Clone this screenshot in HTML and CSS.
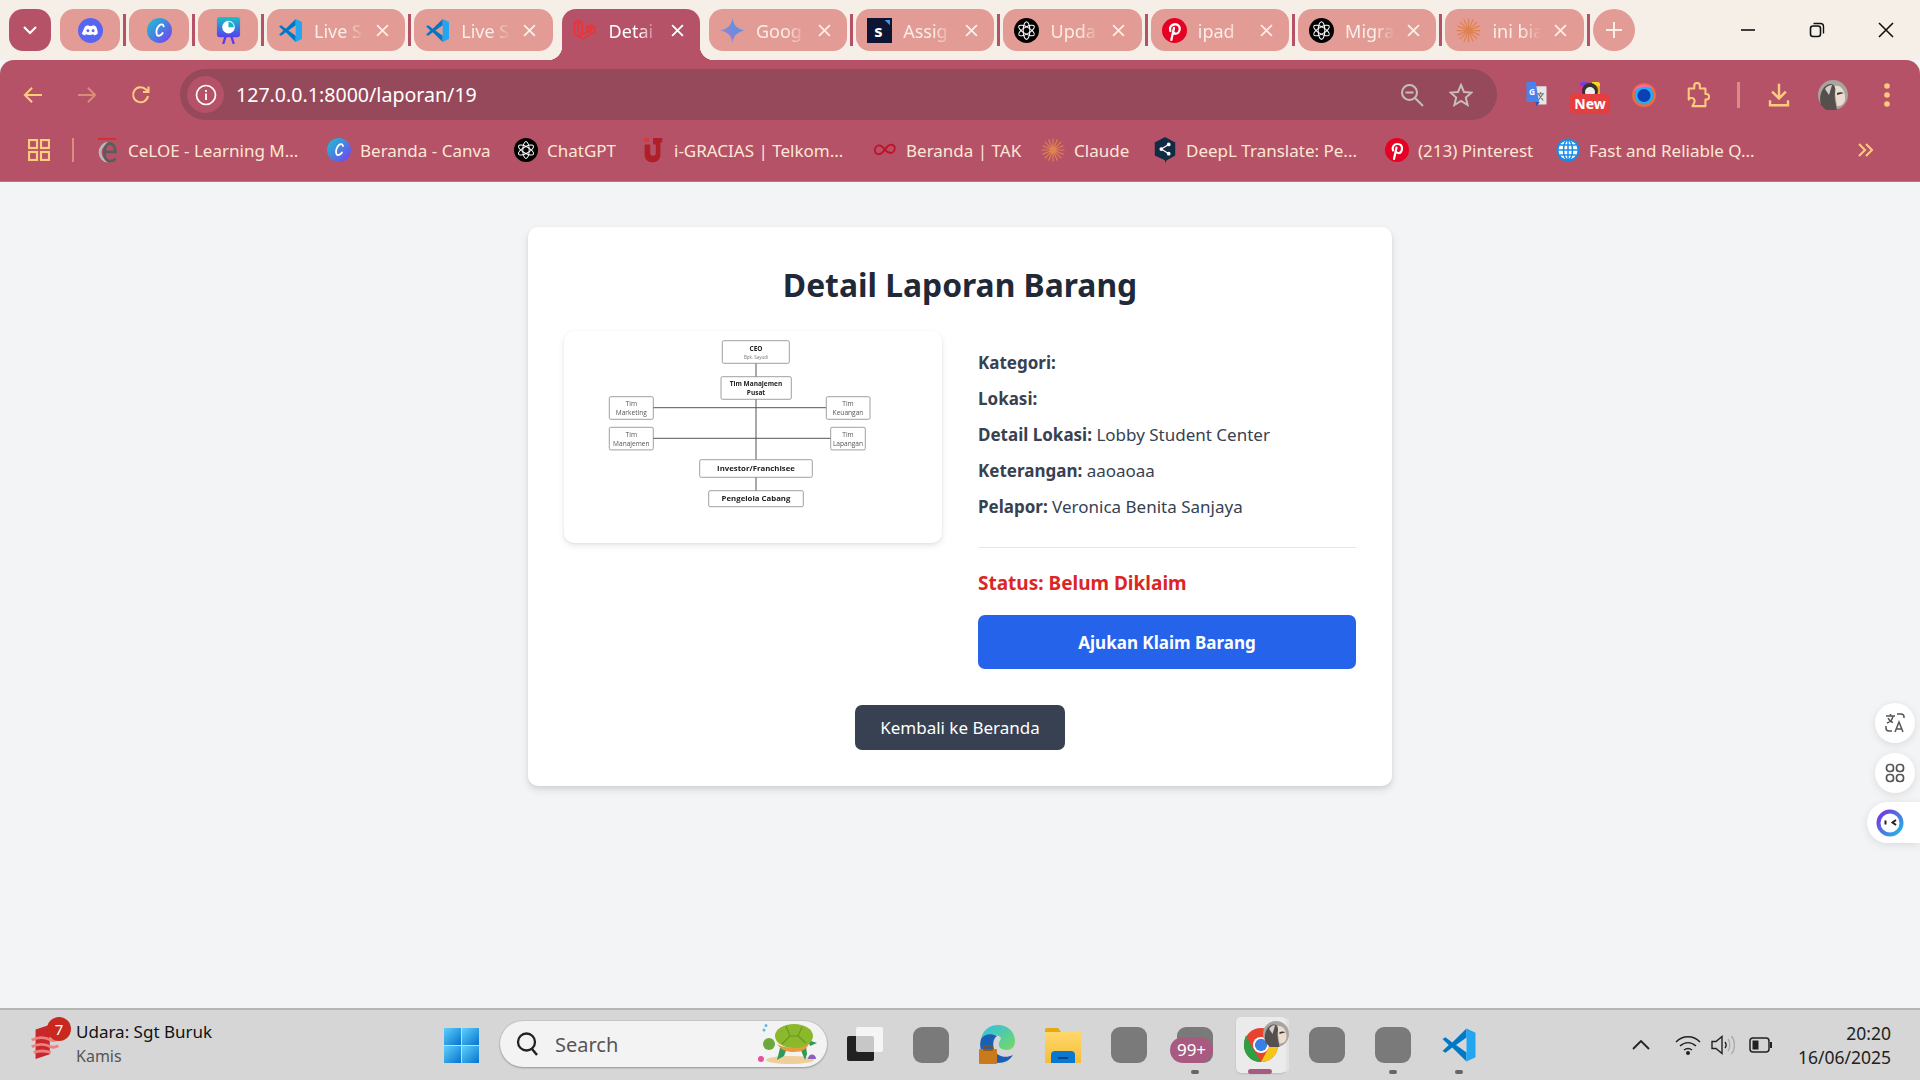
FILE: index.html
```html
<!DOCTYPE html>
<html lang="en">
<head>
    <meta charset="UTF-8">
    <meta name="viewport" content="width=device-width, initial-scale=1.0">
    <title>Detail Laporan Barang</title>
    <link rel="stylesheet" href="styles.css">
</head>
<body>

    <svg class="sprite" aria-hidden="true">
        <defs>
            <linearGradient id="g-canva" x1="0" y1="0" x2="1" y2="1">
                <stop offset="0" stop-color="#18c6d0"/><stop offset="1" stop-color="#7a3bf0"/>
            </linearGradient>
            <linearGradient id="g-gemini" x1="1" y1="0" x2="0" y2="1">
                <stop offset="0" stop-color="#3a9cf0"/><stop offset="1" stop-color="#b078c8"/>
            </linearGradient>
            <linearGradient id="g-slides" x1="0" y1="0" x2="0" y2="1">
                <stop offset="0" stop-color="#14c4c8"/><stop offset="1" stop-color="#5a3cf0"/>
            </linearGradient>
            <linearGradient id="g-edge" x1="0" y1="0" x2="1" y2="1">
                <stop offset="0" stop-color="#2cc0e8"/><stop offset="1" stop-color="#7ad860"/>
            </linearGradient>
            <linearGradient id="g-win" x1="0" y1="0" x2="1" y2="1">
                <stop offset="0" stop-color="#5fd0fb"/><stop offset="1" stop-color="#0672cf"/>
            </linearGradient>
            <linearGradient id="g-ring" x1="0" y1="0" x2="1" y2="1">
                <stop offset="0" stop-color="#7a30e0"/><stop offset="1" stop-color="#20b8e8"/>
            </linearGradient>
            <linearGradient id="g-folder" x1="0" y1="0" x2="0" y2="1">
                <stop offset="0" stop-color="#ffd86a"/><stop offset="1" stop-color="#f6bc3a"/>
            </linearGradient>

            <symbol id="i-discord" viewBox="0 0 24 24">
                <circle cx="12" cy="12" r="12" fill="#5865f2"/>
                <path fill="#fff" d="M7 7.800c1-.5 2-.8 3-.9l.4.8h3.200l.4-.8c1 .1 2 .4 3 .9 1.500 2.300 2.100 4.700 1.900 7.400-1.100.8-2.200 1.300-3.300 1.600l-.7-1.100c-2.600.7-4.800.7-7.400 0l-.7 1.100c-1.100-.3-2.200-.8-3.300-1.600C4.900 12.500 5.500 10.100 7 7.800z"/>
                <circle cx="9.500" cy="12.200" r="1.400" fill="#5865f2"/>
                <circle cx="14.500" cy="12.200" r="1.400" fill="#5865f2"/>
            </symbol>
            <symbol id="i-canva" viewBox="0 0 24 24">
                <circle cx="12" cy="12" r="12" fill="url(#g-canva)"/>
                <path fill="none" stroke="#fff" stroke-width="1.800" stroke-linecap="round" d="M16 8c-.5-2.200-2.500-2.300-4-1-2.500 2.200-3.800 6.500-2.500 9 1.200 2 3.800 1 5.500-1.500"/>
            </symbol>
            <symbol id="i-slides" viewBox="0 0 24 28">
                <rect x="0" y="0" width="24" height="21" rx="3" fill="url(#g-slides)"/>
                <path stroke="#5a3cf0" stroke-width="2.400" d="M9 20 6.500 28M15 20l2.500 8"/>
                <circle cx="12" cy="10.500" r="6.500" fill="#fff"/>
                <path fill="#14b4d0" d="M12 10.500V4.800a6 6 0 0 1 5.600 5.700z"/>
            </symbol>
            <symbol id="i-vscode" viewBox="0 0 24 24">
                <path fill="#0078c8" d="M17 1 7.500 10.300 3 6.900 1 8l4.200 4L1 16l2 1.100 4.500-3.400L17 23v-6l-7-5 7-5z"/>
                <path fill="#23a6f2" d="M17 1l6 2.800v16.400L17 23z"/>
            </symbol>
            <symbol id="i-laravel" viewBox="0 0 28 28">
                <path fill="none" stroke="#e8343a" stroke-width="1.600" stroke-linejoin="round" d="M1.500 5 6 2.500 10.500 5v13.500l5-2.800V10l4.500-2.500 4.500 2.500v5.500l-13.500 8-4.500-2.500-4.500-2.500zM6 2.500v16l4.500-2.500M1.500 5 6 7.500 10.500 5M15.500 10l4.500 2.500 4.500-2.500M20 7.500v5.500M15.500 15.700l4.500-2.700v5.500M6 18.500l5 5"/>
            </symbol>
            <symbol id="i-gemini" viewBox="0 0 24 24">
                <path fill="url(#g-gemini)" d="M12 0c.8 6.500 4.500 11 12 12-7.500 1-11.200 5.500-12 12-.8-6.500-4.500-11-12-12C7.500 11 11.200 6.500 12 0z"/>
            </symbol>
            <symbol id="i-assign" viewBox="0 0 24 24">
                <rect width="24" height="24" fill="#0c1533"/>
                <path fill="#3f9be8" d="M17 2h5v5z"/>
                <text x="7" y="18" class="sprite-s">s</text>
            </symbol>
            <symbol id="i-openai" viewBox="0 0 24 24">
                <circle cx="12" cy="12" r="12" fill="#000"/>
                <g fill="none" stroke="#fff" stroke-width="1">
                    <ellipse cx="12" cy="12" rx="3.200" ry="8.500"/>
                    <ellipse cx="12" cy="12" rx="3.200" ry="8.500" transform="rotate(60 12 12)"/>
                    <ellipse cx="12" cy="12" rx="3.200" ry="8.500" transform="rotate(120 12 12)"/>
                </g>
            </symbol>
            <symbol id="i-pinterest" viewBox="0 0 24 24">
                <circle cx="12" cy="12" r="12" fill="#e60023"/>
                <path fill="none" stroke="#fff" stroke-width="2.200" stroke-linecap="round" d="M8 12.500C6.800 9 9 6 12.500 6c3 0 4.800 2 4.500 4.800-.3 2.700-2 4.400-4 4.200-1.200-.1-1.800-.8-2-1.500M11.500 9.500 9 21"/>
            </symbol>
            <symbol id="i-claude" viewBox="0 0 24 24">
                <g stroke="#e0824f" stroke-width="1.200" stroke-linecap="round">
                    <path d="M12 1v22M1 12h22M4.200 4.200l15.600 15.600M19.800 4.200 4.200 19.800M7.800 1.800l8.400 20.400M16.200 1.800 7.800 22.200M1.800 7.800l20.400 8.400M22.200 7.800 1.800 16.200"/>
                </g>
            </symbol>
            <symbol id="i-celoe" viewBox="0 0 24 28">
                <path fill="#d03030" d="M2 1h20v2H2z"/>
                <path fill="none" stroke="#b8b8b8" stroke-width="3" d="M13 7a8.500 9.500 0 1 0 0 19"/>
                <path fill="none" stroke="#5c5c5c" stroke-width="3" d="M9 16h12c0-6-3-9-6-9s-6 4-6 10 3 9 6 9c3 0 5-1 6-3"/>
            </symbol>
            <symbol id="i-igracias" viewBox="0 0 24 28">
                <path fill="#b01f28" d="M3 8h6v10c0 3 6 3 6 0V8h-3V1h10v5h-2v13c0 11-17 11-17 0z"/>
                <path fill="#d8383e" d="M2 1h6v4H2z"/>
            </symbol>
            <symbol id="i-tak" viewBox="0 0 24 24">
                <path fill="none" stroke="#c01028" stroke-width="1.800" d="M12 12C9 7.500 7 7 5 7.500 2 8.300 1.500 12 2 13.500c.8 2.500 3.500 3.500 6 2 2-1.200 5-5.500 7-7.500 2-2 5.500-1.500 6.500.5 1.200 2.500-.5 6.500-4 6.500-2.500 0-4-1.500-5.500-3z"/>
            </symbol>
            <symbol id="i-deepl" viewBox="0 0 24 28">
                <path fill="#0f2b46" d="M12 0 23 6v14l-9 5-2 3v-3L1 20V6z"/>
                <g fill="#fff"><circle cx="8" cy="13" r="2"/><circle cx="16" cy="8" r="2"/><circle cx="16" cy="18" r="2"/></g>
                <path stroke="#fff" stroke-width="1.300" d="M8 13l8-5M8 13l8 5"/>
            </symbol>
            <symbol id="i-globe" viewBox="0 0 24 24">
                <circle cx="12" cy="12" r="11.500" fill="#1a8ce8"/>
                <circle cx="12" cy="12" r="9.500" fill="#fff"/>
                <g fill="none" stroke="#1a8ce8" stroke-width="1.500">
                    <ellipse cx="12" cy="12" rx="4.500" ry="10"/>
                    <path d="M12 2v20M2 12h20M3.500 7h17M3.500 17h17"/>
                </g>
            </symbol>
            <symbol id="i-close" viewBox="0 0 12 12">
                <path fill="none" stroke="currentColor" stroke-width="1.700" d="M1 1l10 10M11 1 1 11"/>
            </symbol>
            <symbol id="i-avatar" viewBox="0 0 30 30">
                <circle cx="15" cy="15" r="15" fill="#a8a4a0"/>
                <path fill="#eadccf" d="M16 6c7-2 12 5 11 14-1 5-5 6-8 6z"/>
                <path fill="#55504e" d="M3 25C0 15 5 5 12 4c5 0 6 4 5 9s1 11 2 17H8z"/>
                <path fill="#d4cfca" d="M7 9c2-3 4-4 7-4l-3 10z"/>
                <path fill="#3a3634" d="M19 13c2-1 5-1 7 0l-7 2z"/>
            </symbol>
        </defs>
    </svg>

    <div class="browser">
        <div class="tab-strip">
            <div class="tab-menu">
                <svg width="16" height="10" viewBox="0 0 16 10"><path fill="none" stroke="#fff" stroke-width="2.200" d="M2 2l6 6 6-6"/></svg>
            </div>
            <span class="tab-gap"></span>
            <div class="tab pinned"><svg class="fav"><use href="#i-discord"/></svg></div>
            <span class="tab-sep"></span>
            <div class="tab pinned"><svg class="fav"><use href="#i-canva"/></svg></div>
            <span class="tab-sep"></span>
            <div class="tab pinned"><svg class="fav"><use href="#i-slides"/></svg></div>
            <span class="tab-sep"></span>
            <div class="tab"><svg class="fav"><use href="#i-vscode"/></svg><span class="tab-title">Live S</span><svg class="tab-x"><use href="#i-close"/></svg></div>
            <span class="tab-sep"></span>
            <div class="tab"><svg class="fav"><use href="#i-vscode"/></svg><span class="tab-title">Live S</span><svg class="tab-x"><use href="#i-close"/></svg></div>
            <span class="tab-gap"></span>
            <div class="tab active"><svg class="fav"><use href="#i-laravel"/></svg><span class="tab-title">Detai</span><svg class="tab-x"><use href="#i-close"/></svg></div>
            <span class="tab-gap"></span>
            <div class="tab"><svg class="fav"><use href="#i-gemini"/></svg><span class="tab-title">Goog</span><svg class="tab-x"><use href="#i-close"/></svg></div>
            <span class="tab-sep"></span>
            <div class="tab"><svg class="fav"><use href="#i-assign"/></svg><span class="tab-title">Assig</span><svg class="tab-x"><use href="#i-close"/></svg></div>
            <span class="tab-sep"></span>
            <div class="tab"><svg class="fav"><use href="#i-openai"/></svg><span class="tab-title">Upda</span><svg class="tab-x"><use href="#i-close"/></svg></div>
            <span class="tab-sep"></span>
            <div class="tab"><svg class="fav"><use href="#i-pinterest"/></svg><span class="tab-title">ipad</span><svg class="tab-x"><use href="#i-close"/></svg></div>
            <span class="tab-sep"></span>
            <div class="tab"><svg class="fav"><use href="#i-openai"/></svg><span class="tab-title">Migra</span><svg class="tab-x"><use href="#i-close"/></svg></div>
            <span class="tab-sep"></span>
            <div class="tab"><svg class="fav"><use href="#i-claude"/></svg><span class="tab-title">ini bia</span><svg class="tab-x"><use href="#i-close"/></svg></div>
            <span class="tab-sep"></span>
            <div class="tab-new">
                <svg width="18" height="18" viewBox="0 0 18 18"><path fill="none" stroke="#fbeee8" stroke-width="2" d="M9 1v16M1 9h16"/></svg>
            </div>
            <div class="win-controls">
                <svg width="16" height="16" viewBox="0 0 16 16"><path stroke="#111" stroke-width="1.600" d="M1 8h14"/></svg>
                <svg width="16" height="16" viewBox="0 0 16 16"><rect x="1.500" y="4" width="10" height="10.500" rx="2.500" fill="none" stroke="#111" stroke-width="1.600"/><path fill="none" stroke="#111" stroke-width="1.400" d="M4.500 1.500h7a3 3 0 0 1 3 3v7"/></svg>
                <svg width="16" height="16" viewBox="0 0 16 16"><path fill="none" stroke="#111" stroke-width="1.600" d="M1 1l14 14M15 1 1 15"/></svg>
            </div>
        </div>

        <div class="toolbar">
            <div class="tool">
                <svg width="20" height="18" viewBox="0 0 22 20"><path fill="none" stroke="#ffcb7c" stroke-width="2.200" d="M21 10H2M10 2l-8 8 8 8"/></svg>
            </div>
            <div class="tool">
                <svg width="20" height="18" viewBox="0 0 22 20"><path fill="none" stroke="#db8c76" stroke-width="2.200" d="M1 10h19M12 2l8 8-8 8"/></svg>
            </div>
            <div class="tool">
                <svg width="20" height="20" viewBox="0 0 20 20"><path fill="none" stroke="#ffcb7c" stroke-width="2" d="M17 11a7.500 7.500 0 1 1-2-6.500L17.500 7M17.500 1.500V7H12"/></svg>
            </div>
            <div class="address">
                <div class="info-chip">
                    <svg width="22" height="22" viewBox="0 0 22 22"><circle cx="11" cy="11" r="9.500" fill="none" stroke="#fff" stroke-width="1.700"/><path stroke="#fff" stroke-width="1.800" d="M11 9.500V16M11 6v2"/></svg>
                </div>
                <span class="url">127.0.0.1:8000/laporan/19</span>
                <div class="address-end">
                    <svg width="24" height="24" viewBox="0 0 24 24"><circle cx="9.500" cy="9.500" r="7.500" fill="none" stroke="#c9bcbc" stroke-width="2"/><path stroke="#c9bcbc" stroke-width="2" d="M5.500 9.500h8M15 15l8 8"/></svg>
                    <svg width="24" height="24" viewBox="0 0 24 24"><path fill="none" stroke="#c9bcbc" stroke-width="2" d="M12 2l3 7 7.500.6-5.700 5 1.800 7.400L12 18l-6.600 4 1.800-7.400-5.700-5L9 9z"/></svg>
                </div>
            </div>
            <div class="tool first-ext">
                <svg width="25" height="25" viewBox="0 0 26 30">
                    <path fill="#e6e6e6" d="M10 5h14a1 1 0 0 1 1 1v20a1 1 0 0 1-1 1H12z"/>
                    <path stroke="#777" stroke-width="1.300" d="M14 14h8M18 12v2M15 22l6-8M15 14l6 8"/>
                    <path fill="#4a82ec" d="M1 0h11l4 24H1z"/>
                    <path fill="#2a54b0" d="M11 24h6l-4 5z"/>
                    <text x="4" y="15" class="sprite-g">G</text>
                </svg>
            </div>
            <div class="tool">
                <div class="new-ext">
                    <svg width="24" height="16" viewBox="0 0 24 16"><path fill="#e0308c" d="M2 16V2h5v14z"/><path fill="#f6a81c" d="M17 2h5v14h-5z"/><path fill="#7a3be0" d="M2 2a2 2 0 0 1 2-2h6v4H2z"/><path fill="#f6d81c" d="M14 0h6a2 2 0 0 1 2 2v2h-8z"/><circle cx="12" cy="9" r="8" fill="#333"/><circle cx="12" cy="10" r="5" fill="#eee"/></svg>
                    <span class="new-badge">New</span>
                </div>
            </div>
            <div class="tool">
                <svg width="24" height="24" viewBox="0 0 24 24"><circle cx="12" cy="12" r="12" fill="#ee6a3c"/><circle cx="12" cy="12" r="9.500" fill="#2ca8f0"/><circle cx="12" cy="12.500" r="6.500" fill="#0b3fb4"/><path fill="#f06ac0" d="M2 8C5 1 15-1 22 6 16 3 8 3 2 8z"/></svg>
            </div>
            <div class="tool">
                <svg width="24" height="26" viewBox="0 0 24 28"><path fill="none" stroke="#ffcb7c" stroke-width="2.200" stroke-linejoin="round" d="M2 7h6V4a3 3 0 0 1 6 0v3h6v6h1a3 3 0 0 1 0 6h-1v7H6l2-4a3 3 0 0 0-6-3z"/></svg>
            </div>
            <span class="tool-sep"></span>
            <div class="tool">
                <svg width="24" height="24" viewBox="0 0 24 28"><path fill="none" stroke="#ffcb7c" stroke-width="2.800" d="M12 1v16M4 10l8 8 8-8M1.500 20v6h21v-6"/></svg>
            </div>
            <div class="tool">
                <svg class="avatar"><use href="#i-avatar"/></svg>
            </div>
            <div class="tool">
                <svg width="8" height="26" viewBox="0 0 8 26"><g fill="#ffcb7c"><circle cx="4" cy="4" r="2.800"/><circle cx="4" cy="13" r="2.800"/><circle cx="4" cy="22" r="2.800"/></g></svg>
            </div>
        </div>

        <div class="bookmarks">
            <div class="apps">
                <svg width="22" height="22" viewBox="0 0 22 22"><g fill="none" stroke="#ffcb7c" stroke-width="2.200"><rect x="1" y="1" width="8" height="8"/><rect x="13" y="1" width="8" height="8"/><rect x="1" y="13" width="8" height="8"/><rect x="13" y="13" width="8" height="8"/></g></svg>
            </div>
            <span class="bm-sep"></span>
            <div class="bm-list">
                <div class="bm"><svg class="fav"><use href="#i-celoe"/></svg><span>CeLOE - Learning M...</span></div>
                <div class="bm"><svg class="fav"><use href="#i-canva"/></svg><span>Beranda - Canva</span></div>
                <div class="bm"><svg class="fav"><use href="#i-openai"/></svg><span>ChatGPT</span></div>
                <div class="bm"><svg class="fav"><use href="#i-igracias"/></svg><span>i-GRACIAS | Telkom...</span></div>
                <div class="bm"><svg class="fav"><use href="#i-tak"/></svg><span>Beranda | TAK</span></div>
                <div class="bm"><svg class="fav"><use href="#i-claude"/></svg><span>Claude</span></div>
                <div class="bm"><svg class="fav"><use href="#i-deepl"/></svg><span>DeepL Translate: Pe...</span></div>
                <div class="bm"><svg class="fav"><use href="#i-pinterest"/></svg><span>(213) Pinterest</span></div>
                <div class="bm"><svg class="fav"><use href="#i-globe"/></svg><span>Fast and Reliable Q...</span></div>
            </div>
            <svg class="bm-more" width="16" height="14" viewBox="0 0 16 14"><path fill="none" stroke="#ffcb7c" stroke-width="2" d="M1 1l6 6-6 6M8 1l6 6-6 6"/></svg>
        </div>

        <main class="page">
            <section class="card">
                <h1 class="card-title">Detail Laporan Barang</h1>
                <div class="detail-grid">
                    <div class="photo">
                        <svg class="chart" viewBox="0 0 378 211">
                            <path class="chart-line" d="M192 32v128M89 76.700h173M89 107.300h178"/>
                            <rect class="chart-box" x="158.300" y="9.700" width="67" height="22.600" rx="1.500"/>
                            <rect class="chart-box" x="157" y="45.700" width="70.300" height="22.600" rx="1.500"/>
                            <rect class="chart-box" x="45.300" y="65.700" width="44" height="22.600" rx="1.500"/>
                            <rect class="chart-box" x="262.300" y="65.700" width="43.700" height="22.600" rx="1.500"/>
                            <rect class="chart-box" x="45.300" y="96.300" width="44" height="22.600" rx="1.500"/>
                            <rect class="chart-box" x="266.700" y="96.300" width="34.600" height="22.600" rx="1.500"/>
                            <rect class="chart-box" x="135.700" y="128.700" width="112.600" height="17.600" rx="1.500"/>
                            <rect class="chart-box" x="144.700" y="159.700" width="94.600" height="16" rx="1.500"/>
                            <text class="chart-b" x="192" y="19.500">CEO</text>
                            <text class="chart-xs" x="192" y="28">Bpk. Sayudi</text>
                            <text class="chart-b" x="192" y="55">Tim Manajemen</text>
                            <text class="chart-b" x="192" y="64">Pusat</text>
                            <text class="chart-n" x="67.300" y="75">Tim</text>
                            <text class="chart-n" x="67.300" y="84">Marketing</text>
                            <text class="chart-n" x="284" y="75">Tim</text>
                            <text class="chart-n" x="284" y="84">Keuangan</text>
                            <text class="chart-n" x="67.300" y="105.500">Tim</text>
                            <text class="chart-n" x="67.300" y="114.500">Manajemen</text>
                            <text class="chart-n" x="284" y="105.500">Tim</text>
                            <text class="chart-n" x="284" y="114.500">Lapangan</text>
                            <text class="chart-l" x="192" y="140">Investor/Franchisee</text>
                            <text class="chart-l" x="192" y="170">Pengelola Cabang</text>
                        </svg>
                    </div>
                    <div class="info">
                        <p class="info-row"><b>Kategori:</b></p>
                        <p class="info-row"><b>Lokasi:</b></p>
                        <p class="info-row"><b>Detail Lokasi:</b> Lobby Student Center</p>
                        <p class="info-row"><b>Keterangan:</b> aaoaoaa</p>
                        <p class="info-row"><b>Pelapor:</b> Veronica Benita Sanjaya</p>
                        <hr class="info-line">
                        <p class="status">Status: Belum Diklaim</p>
                        <a class="btn-claim">Ajukan Klaim Barang</a>
                    </div>
                </div>
                <div class="back-wrap"><a class="btn-back">Kembali ke Beranda</a></div>
            </section>

            <div class="side-btn side-translate">
                <svg width="22" height="22" viewBox="0 0 22 22"><g fill="none" stroke="#555" stroke-width="1.500"><path d="M2 4h9M6.500 2v2M9 4c-.5 3-3 6-6 7M4 6c1 2 3 4 5 4.500M13 2h4a3 3 0 0 1 3 3v1M2 14v2a3 3 0 0 0 3 3h3M11 20l4-10 4 10M12.500 17h5"/></g></svg>
            </div>
            <div class="side-btn side-apps">
                <svg width="20" height="20" viewBox="0 0 20 20"><g fill="none" stroke="#555" stroke-width="1.700"><rect x="1.500" y="1.500" width="7" height="7" rx="3"/><rect x="11.500" y="1.500" width="7" height="7" rx="3"/><rect x="1.500" y="11.500" width="7" height="7" rx="3"/><rect x="11.500" y="11.500" width="7" height="7" rx="3"/></g></svg>
            </div>
            <div class="side-pill">
                <svg width="28" height="28" viewBox="0 0 28 28"><circle cx="14" cy="14" r="11.500" fill="#fff" stroke="url(#g-ring)" stroke-width="4"/><path fill="none" stroke="#222" stroke-width="2" d="M9.500 11.500v4M20 11l-3.500 2.500L20 16"/></svg>
            </div>
        </main>

        <footer class="taskbar">
            <div class="widget">
                <div class="widget-icon">
                    <svg width="32" height="38" viewBox="0 0 32 40"><path fill="#c8282c" d="M5 8l15-5v31L5 39z"/><g fill="none" stroke="#f08080" stroke-width="3"><path d="M1 19c6-3 14-3 20 0 2 1 6 0 8-1M1 26c6-3 14-3 20 0 2 1 6 0 8-1M3 32c6-2 12-2 18 0"/></g></svg>
                    <span class="widget-badge">7</span>
                </div>
                <div class="widget-text">
                    <span class="widget-main">Udara: Sgt Buruk</span>
                    <span class="widget-sub">Kamis</span>
                </div>
            </div>
            <svg class="win-logo" width="35" height="35" viewBox="0 0 35 35"><g fill="url(#g-win)"><rect width="17" height="17"/><rect x="18" width="17" height="17"/><rect y="18" width="17" height="17"/><rect x="18" y="18" width="17" height="17"/></g></svg>
            <div class="search">
                <svg width="24" height="26" viewBox="0 0 24 26"><circle cx="10.500" cy="11" r="8.500" fill="none" stroke="#222" stroke-width="2.300"/><path stroke="#222" stroke-width="2.500" d="M16 18l5 6"/></svg>
                <span class="search-text">Search</span>
                <svg class="turtle" width="64" height="40" viewBox="0 0 62 40">
                    <ellipse cx="32" cy="36" rx="24" ry="4" fill="#eecf9c"/>
                    <path fill="#2f9a58" d="M22 24l-3 12 7-4 3-8zM42 24l5 12 2-6-1-8zM50 16l9 3-7 3z"/>
                    <path fill="#e89a3c" d="M19 20c8 5 22 5 33-3-2 8-8 11-16 11s-13-2-17-8z"/>
                    <ellipse cx="36" cy="12" rx="19" ry="12" fill="#8cb82c"/>
                    <path fill="none" stroke="#6c9a1c" stroke-width="1.200" d="M28 2l4 10-8 8M44 3l-4 9 8 7M32 12h8"/>
                    <circle cx="11" cy="20" r="6" fill="#6ca83c"/>
                    <circle cx="3" cy="35" r="3" fill="#e850a0"/>
                    <path fill="#8a60c0" d="M50 35c0-6 8-6 8 0z"/>
                    <circle cx="6" cy="6" r="1.500" fill="#60b8e8"/><circle cx="8" cy="1.500" r="1.500" fill="#60b8e8"/>
                </svg>
            </div>
            <div class="task-icons">
                <div class="task">
                    <svg width="36" height="36" viewBox="0 0 36 36"><rect x="0" y="9" width="27" height="25" rx="2" fill="#222"/><rect x="9" y="0" width="27" height="25" rx="2" fill="#fff" opacity=".75"/></svg>
                </div>
                <div class="task"><span class="app-blank"></span></div>
                <div class="task">
                    <svg width="36" height="40" viewBox="0 0 36 40"><path fill="url(#g-edge)" d="M2 14C4 4 12 0 19 0c10 0 17 7 17 16 0 5-3 9-8 9-6 0-9-3-8-7 0-2 2-3 2-5-2-4-14-5-20 1z"/><path fill="#1a5fb4" d="M2 14c-3 10 2 24 17 24 7 0 12-3 15-8-8 4-17 1-19-6-2-6 0-11 3-13C12 8 5 9 2 14z"/><rect x="0" y="24" width="18" height="15" rx="1" fill="#c87a1c"/><rect x="5" y="21" width="8" height="4" fill="none" stroke="#8a5010" stroke-width="1.500"/></svg>
                </div>
                <div class="task">
                    <svg width="36" height="36" viewBox="0 0 36 36"><path fill="#e8a810" d="M0 3a2 2 0 0 1 2-2h11l3 4h-16z"/><rect y="5" width="36" height="31" fill="url(#g-folder)"/><path fill="#0a78d0" d="M6 36V28a4 4 0 0 1 4-4h16a4 4 0 0 1 4 4v8z"/><path stroke="#04386c" stroke-width="1.600" d="M13 31h10"/></svg>
                </div>
                <div class="task"><span class="app-blank"></span></div>
                <div class="task has-dot"><span class="app-blank"></span><span class="count-badge">99+</span></div>
                <div class="task is-active">
                    <svg width="38" height="38" viewBox="0 0 38 38"><circle cx="19" cy="19" r="18" fill="#e8432e"/><path fill="#2f9e44" d="M3 9 12 25l7 12C8 37 1 29 1 19c0-4 1-7 2-10z"/><path fill="#f5c518" d="M19 37l8-15 7-12c2 3 3 6 3 9 0 10-8 18-18 18z"/><circle cx="19" cy="19" r="8.500" fill="#fff"/><circle cx="19" cy="19" r="6.500" fill="#3a7fe8"/></svg>
                    <svg class="chrome-avatar"><use href="#i-avatar"/></svg>
                </div>
                <div class="task"><span class="app-blank"></span></div>
                <div class="task has-dot"><span class="app-blank"></span></div>
                <div class="task has-dot"><svg width="36" height="36"><use href="#i-vscode"/></svg></div>
            </div>
            <div class="tray">
                <svg class="tray-up" width="18" height="10" viewBox="0 0 18 10"><path fill="none" stroke="#222" stroke-width="1.800" d="M1 9l8-8 8 8"/></svg>
                <svg class="tray-wifi" width="26" height="20" viewBox="0 0 26 20"><g fill="none" stroke="#222" stroke-width="1.500"><path d="M1 7c7-7 17-7 24 0M5 11c5-4.500 11-4.500 16 0M9 15c2.500-2 5.500-2 8 0"/></g><circle cx="13" cy="18" r="2" fill="#222"/></svg>
                <svg class="tray-vol" width="24" height="22" viewBox="0 0 24 22"><path fill="none" stroke="#222" stroke-width="1.400" d="M1 7.500h4L11 2.500v17l-6-5H1zM14 8c1.500 2 1.500 4 0 6"/><path fill="none" stroke="#aaa" stroke-width="1.300" d="M17 5c2.500 3.500 2.500 8.500 0 12M20.500 2c4 5 4 13 0 18"/></svg>
                <svg class="tray-bat" width="24" height="16" viewBox="0 0 24 16"><rect x="1" y="1" width="19" height="14" rx="3" fill="none" stroke="#222" stroke-width="1.500"/><rect x="3.500" y="3.500" width="6" height="9" fill="#222"/><path fill="#222" d="M21 5h2v6h-2z"/></svg>
                <div class="clock">
                    <span>20:20</span>
                    <span>16/06/2025</span>
                </div>
            </div>
        </footer>
    </div>

</body>
</html>
```

FILE: styles.css
```css
* {
    box-sizing: border-box;
}

html, body {
    margin: 0;
    padding: 0;
}

body {
    width: 1920px;
    height: 1080px;
    overflow: hidden;
    font-family: "Noto Sans", "Open Sans", sans-serif;
    background-color: #f3f4f6;
}

.sprite {
    position: absolute;
    width: 0;
    height: 0;
}

.sprite-s {
    font: bold 16px "Noto Sans", sans-serif;
    fill: #fff;
}

.sprite-g {
    font: bold 10px "Noto Sans", sans-serif;
    fill: #fff;
}

.browser {
    display: flex;
    flex-direction: column;
    height: 1080px;
}

/* tab strip */
.tab-strip {
    display: flex;
    align-items: flex-start;
    height: 60px;
    padding: 9px 0 0 9px;
    background-color: #f6efe7;
}

.tab-menu {
    display: flex;
    align-items: center;
    justify-content: center;
    width: 42px;
    height: 42px;
    border-radius: 14px;
    background-color: #b55267;
}

.tab-gap {
    width: 9px;
    height: 42px;
    flex: none;
}

.tab-sep {
    width: 3px;
    height: 32px;
    margin: 5px 3px 0;
    flex: none;
    background-color: #b55267;
}

.tab {
    display: flex;
    align-items: center;
    position: relative;
    width: 138.300px;
    height: 42px;
    padding-left: 11px;
    flex: none;
    border-radius: 14px;
    background-color: #e29b95;
    color: #fbeee8;
}

.tab.pinned {
    width: 60px;
    padding-left: 0;
    justify-content: center;
}

.tab .fav {
    width: 25px;
    height: 27px;
    flex: none;
}

.tab-title {
    width: 50px;
    margin-left: 11px;
    padding-top: 2px;
    white-space: nowrap;
    font-size: 18px;
    -webkit-mask-image: linear-gradient(to right, #000 60%, transparent 100%);
    mask-image: linear-gradient(to right, #000 60%, transparent 100%);
}

.tab-x {
    width: 13px;
    height: 13px;
    margin-left: 12px;
    flex: none;
}

.tab.active {
    height: 51px;
    padding-bottom: 9px;
    border-radius: 14px 14px 0 0;
    background-color: #b55267;
    color: #fff;
}

.tab.active::before,
.tab.active::after {
    content: "";
    position: absolute;
    bottom: 0;
    width: 14px;
    height: 14px;
}

.tab.active::before {
    left: -14px;
    background: radial-gradient(circle at 0 0, transparent 14px, #b55267 14.500px);
}

.tab.active::after {
    right: -14px;
    background: radial-gradient(circle at 100% 0, transparent 14px, #b55267 14.500px);
}

.tab-new {
    display: flex;
    align-items: center;
    justify-content: center;
    width: 42px;
    height: 42px;
    flex: none;
    border-radius: 50%;
    background-color: #e29b95;
}

.win-controls {
    display: flex;
    align-items: center;
    gap: 53px;
    height: 42px;
    margin-left: auto;
    margin-right: 26px;
}

/* toolbar */
.toolbar {
    display: flex;
    align-items: center;
    height: 60px;
    padding: 9px 6px 0;
    border-radius: 14px 14px 0 0;
    background-color: #b55267;
}

.tool {
    display: flex;
    align-items: center;
    justify-content: center;
    width: 54px;
    height: 51px;
    flex: none;
}

.address {
    display: flex;
    align-items: center;
    flex: 1;
    height: 51px;
    margin-left: 12px;
    padding-left: 7px;
    border-radius: 26px;
    background-color: #96495a;
}

.info-chip {
    display: flex;
    align-items: center;
    justify-content: center;
    width: 37px;
    height: 37px;
    border-radius: 50%;
    background-color: #b55267;
}

.url {
    margin-left: 12px;
    font-size: 19.600px;
    color: #fff;
}

.address-end {
    display: flex;
    align-items: center;
    gap: 25px;
    margin-left: auto;
    margin-right: 24px;
}

.first-ext {
    margin-left: 12px;
}

.tool-sep {
    width: 3px;
    height: 26px;
    margin: 0 12px;
    flex: none;
    background-color: #dc8c80;
}

.new-ext {
    display: flex;
    flex-direction: column;
    align-items: center;
    margin-top: 6px;
}

.new-badge {
    margin-top: -4px;
    padding: 0 4px;
    border-radius: 4px;
    background-color: #e53e3e;
    color: #fff;
    font-size: 14px;
    line-height: 20px;
    font-weight: 700;
}

.avatar {
    width: 30px;
    height: 30px;
}

/* bookmarks */
.bookmarks {
    display: flex;
    align-items: center;
    height: 62px;
    padding-bottom: 1px;
    border-bottom: 1px solid #c96f6f;
    background-color: #b55267;
}

.apps {
    display: flex;
    margin-left: 28px;
}

.bm-sep {
    width: 2px;
    height: 24px;
    margin-left: 22px;
    background-color: #dc8c80;
}

.bm-list {
    display: grid;
    grid-template-columns: 232px 187px 127px 232px 168px 112px 232px 171px 220px;
    margin-left: 21px;
}

.bm {
    display: flex;
    align-items: center;
    gap: 9px;
    white-space: nowrap;
    font-size: 17px;
    color: #fbe8d4;
}

.bm .fav {
    width: 24px;
    height: 26px;
    flex: none;
}

.bm-more {
    margin-left: auto;
    margin-right: 46px;
}

/* page */
.page {
    position: relative;
    flex: 1;
    padding-top: 45px;
}

.card {
    width: 864px;
    margin: 0 auto;
    padding: 36px;
    border-radius: 10px;
    background-color: #fff;
    box-shadow: 0 4px 8px rgba(0, 0, 0, 0.1), 0 2px 4px rgba(0, 0, 0, 0.06);
}

.card-title {
    margin: 0 0 24px;
    font-size: 31.800px;
    line-height: 44px;
    font-weight: 700;
    text-align: center;
    color: #1f2937;
}

.detail-grid {
    display: grid;
    grid-template-columns: 378px 378px;
    gap: 36px;
    align-items: start;
}

.photo {
    height: 212px;
    border-radius: 10px;
    background-color: #fff;
    box-shadow: 0 3px 7px rgba(0, 0, 0, 0.09), 0 1px 3px rgba(0, 0, 0, 0.05);
}

.chart {
    display: block;
    width: 378px;
    height: 211px;
    filter: blur(0.3px);
}

.chart-line {
    fill: none;
    stroke: #555;
    stroke-width: 1;
}

.chart-box {
    fill: #fff;
    stroke: #888;
    stroke-width: 0.800;
}

.chart text {
    font-family: "Open Sans", sans-serif;
    text-anchor: middle;
}

.chart-b {
    font-size: 6.500px;
    font-weight: 700;
    fill: #222;
}

.chart-xs {
    font-size: 4.500px;
    fill: #777;
}

.chart-n {
    font-size: 6.600px;
    fill: #555;
}

.chart-l {
    font-size: 7.800px;
    font-weight: 700;
    fill: #222;
}

.info {
    padding-top: 14px;
}

.info-row {
    margin: 0;
    height: 36px;
    line-height: 36px;
    font-size: 17px;
    color: #374151;
}

.info-line {
    height: 1px;
    margin: 22px 0 21px;
    border: 0;
    background-color: #e5e7eb;
}

.status {
    margin: 0 0 18px;
    font-size: 19px;
    line-height: 28px;
    font-weight: 700;
    color: #dc2626;
}

.btn-claim {
    display: block;
    height: 54px;
    border-radius: 7px;
    background-color: #2563eb;
    color: #fff;
    font-size: 17px;
    font-weight: 700;
    line-height: 56px;
    text-align: center;
}

.back-wrap {
    margin-top: 36px;
    text-align: center;
}

.btn-back {
    display: inline-block;
    width: 210px;
    height: 45px;
    border-radius: 7px;
    background-color: #374151;
    color: #fff;
    font-size: 17px;
    line-height: 45px;
}

.side-btn {
    position: absolute;
    right: 5px;
    display: flex;
    align-items: center;
    justify-content: center;
    width: 40px;
    height: 40px;
    border-radius: 50%;
    background-color: #fff;
    box-shadow: 0 2px 8px rgba(0, 0, 0, 0.1);
}

.side-translate {
    top: 521px;
}

.side-apps {
    top: 571px;
}

.side-pill {
    position: absolute;
    top: 620px;
    right: 0;
    display: flex;
    align-items: center;
    width: 53px;
    height: 41px;
    padding-left: 9px;
    border-radius: 21px 0 0 21px;
    background-color: #fff;
    box-shadow: 0 2px 8px rgba(0, 0, 0, 0.1);
}

/* taskbar */
.taskbar {
    display: flex;
    align-items: center;
    height: 72px;
    border-top: 2px solid #b5b5b5;
    background-color: #d6d6d6;
}

.widget {
    display: flex;
    align-items: center;
    width: 444px;
    padding-left: 30px;
    flex: none;
    margin-bottom: 2px;
}

.widget-icon {
    position: relative;
    width: 46px;
    height: 44px;
}

.widget-badge {
    position: absolute;
    top: -5px;
    left: 17px;
    width: 24px;
    height: 24px;
    border-radius: 50%;
    background-color: #c8281e;
    color: #fff;
    font-size: 15px;
    line-height: 24px;
    text-align: center;
}

.widget-text {
    display: flex;
    flex-direction: column;
    line-height: 24px;
}

.widget-main {
    font-size: 17px;
    color: #111;
}

.widget-sub {
    font-size: 16px;
    color: #555;
}

.search {
    display: flex;
    align-items: center;
    width: 327px;
    height: 46px;
    margin-left: 21px;
    margin-bottom: 2px;
    padding: 0 6px 0 16px;
    flex: none;
    border-radius: 23px;
    background-color: #f3f3f3;
    box-shadow: 0 1px 2px #999, 0 0 0 1px #c8c8c8;
}

.search-text {
    margin-left: 15px;
    font-size: 20px;
    color: #555;
}

.turtle {
    margin-left: auto;
}

.task-icons {
    display: flex;
    align-items: center;
    gap: 30px;
    margin-left: 20px;
}

.task {
    position: relative;
    display: flex;
    align-items: center;
    justify-content: center;
    width: 36px;
    height: 36px;
}

.app-blank {
    display: block;
    width: 36px;
    height: 36px;
    border-radius: 9px;
    background-color: #7a7a7a;
}

.count-badge {
    position: absolute;
    top: 10px;
    left: -7px;
    width: 43px;
    height: 26px;
    border-radius: 13px;
    background-color: #a85a80;
    color: #fff;
    font-size: 17px;
    line-height: 26px;
    text-align: center;
}

.task.has-dot::after {
    content: "";
    position: absolute;
    bottom: -11px;
    left: 14px;
    width: 8px;
    height: 4px;
    border-radius: 2px;
    background-color: #666;
}

.task.is-active::before {
    content: "";
    position: absolute;
    top: -10px;
    left: -7px;
    width: 50px;
    height: 56px;
    border-radius: 5px;
    background-color: #ebebeb;
    box-shadow: 4px 0 0 -1px #e2e2e2, 0 1px 2px #bbb;
}

.task.is-active::after {
    content: "";
    position: absolute;
    bottom: -11px;
    left: 5px;
    width: 24px;
    height: 5px;
    border-radius: 3px;
    background-color: #a85a80;
}

.task.is-active svg {
    position: relative;
}

.task.is-active .chrome-avatar {
    position: absolute;
    top: -8px;
    left: 20px;
    width: 26px;
    height: 30px;
}

.tray {
    display: flex;
    align-items: center;
    margin-left: auto;
    margin-right: 29px;
}

.tray-wifi {
    margin-left: 25px;
}

.tray-vol {
    margin-left: 10px;
}

.tray-bat {
    margin-left: 14px;
}

.clock {
    display: flex;
    flex-direction: column;
    align-items: flex-end;
    margin-left: 25px;
    font-size: 17.500px;
    line-height: 24px;
    color: #222;
}
```
